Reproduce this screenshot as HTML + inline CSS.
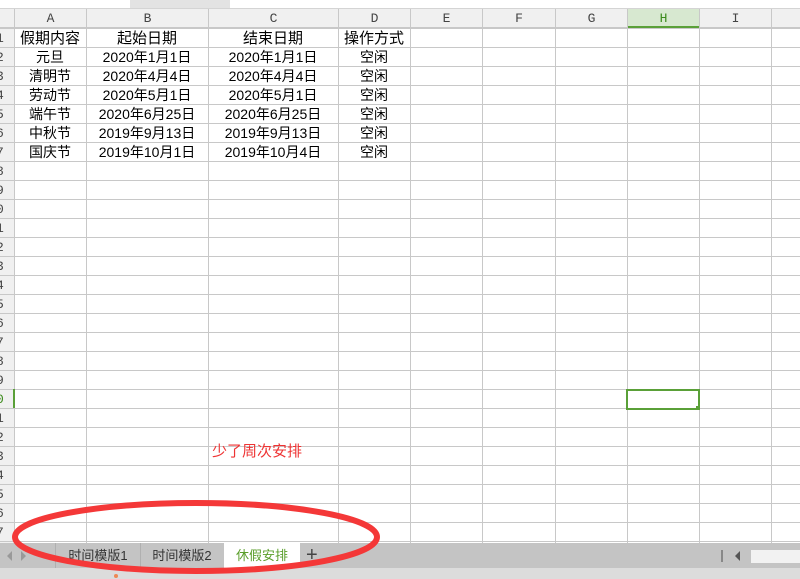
<!DOCTYPE html>
<html><head><meta charset="utf-8"><style>
body{margin:0;width:800px;height:579px;overflow:hidden;background:#fff;position:relative;font-family:"Liberation Sans","Noto Sans CJK SC",sans-serif}
.a{position:absolute}
.c{position:absolute;text-align:center;font-size:14px;color:#000;line-height:19px;font-family:"Liberation Sans","Noto Sans CJK SC",sans-serif}
.h{position:absolute;text-align:center;font-size:13px;color:#444;line-height:19px;font-family:"Liberation Mono","DejaVu Sans Mono",monospace}
</style></head><body>
<div class="a" style="left:0;top:0;width:800px;height:8px;background:#fff;border-bottom:1px solid #d4d4d4"></div>
<div class="a" style="left:130px;top:0;width:100px;height:8px;background:#e3e3e3"></div>
<div class="a" style="left:0;top:9px;width:800px;height:19px;background:#f0f0f0;border-bottom:1px solid #c8c8c8;box-sizing:border-box"></div>
<div class="a" style="left:0;top:28px;width:14px;height:515px;background:#f0f0f0"></div>
<div id="g"></div>
<div class="c" style="left:212px;top:442px;color:#ee3333;font-size:15px">少了周次安排</div>
<div class="a" style="left:0;top:543px;width:800px;height:25px;background:#c4c4c4"></div>
<div class="a" style="left:0;top:568px;width:800px;height:11px;background:#dcdcdc"></div>
<div class="a" style="left:7px;top:551px;width:0;height:0;border:5px solid transparent;border-right-color:#999;border-left:0"></div>
<div class="a" style="left:21px;top:551px;width:0;height:0;border:5px solid transparent;border-left-color:#999;border-right:0"></div>
<div class="a" style="left:55px;top:543px;width:84px;height:25px;border-left:1px solid #b0b0b0;border-right:1px solid #b0b0b0;font-size:13px;color:#333;text-align:center;line-height:25px">时间模版1</div>
<div class="a" style="left:140px;top:543px;width:84px;height:25px;border-right:1px solid #b0b0b0;font-size:13px;color:#333;text-align:center;line-height:25px">时间模版2</div>
<div class="a" style="left:224px;top:543px;width:76px;height:25px;background:#fff;font-size:13px;color:#5a9e2a;text-align:center;line-height:25px">休假安排</div>
<div class="a" style="left:306px;top:543px;font-size:20px;color:#444;line-height:25px">+</div>
<div class="a" style="left:721px;top:550px;width:2px;height:12px;background:#888"></div>
<div class="a" style="left:735px;top:551px;width:0;height:0;border:5px solid transparent;border-right-color:#555;border-left:0"></div>
<div class="a" style="left:751px;top:550px;width:49px;height:13px;background:#f2f2f2"></div>
<div class="a" style="left:114px;top:574px;width:4px;height:4px;border-radius:50%;background:#e85"></div>
<svg class="a" style="left:0;top:0" width="800" height="579"><ellipse cx="196" cy="537" rx="181" ry="34" fill="none" stroke="#f43838" stroke-width="6"/></svg>
<script>
var cols=[14,86,208,338,410,482,555,627,699,771,843],names="ABCDEFGHIJ",g="";
for(var i=0;i<cols.length;i++)g+='<div class="a" style="left:'+cols[i]+'px;top:9px;width:1px;height:534px;background:#c8c8c8"></div>';
for(var r=0;r<=27;r++){var y=28+19*r;g+='<div class="a" style="left:0;top:'+y+'px;width:800px;height:1px;background:#c8c8c8"></div>';
if(r<27)g+='<div class="h" style="left:-4px;top:'+(y+1)+'px;width:14px;text-align:left;'+(r==19?'color:#3a8a1a;':'')+'">'+((r+1)%10)+'</div>';}
for(var i=0;i<9;i++){var hl=i==7;g+='<div class="h" style="left:'+(cols[i]+1)+'px;top:9px;width:'+(cols[i+1]-cols[i]-1)+'px;'+(hl?'background:#d7e8d0;color:#3a8a1a;border-bottom:2px solid #5aa038;box-sizing:border-box;height:19px;':'')+'">'+names[i]+'</div>';}
var d=[["假期内容","起始日期","结束日期","操作方式"],["元旦","2020年1月1日","2020年1月1日","空闲"],["清明节","2020年4月4日","2020年4月4日","空闲"],["劳动节","2020年5月1日","2020年5月1日","空闲"],["端午节","2020年6月25日","2020年6月25日","空闲"],["中秋节","2019年9月13日","2019年9月13日","空闲"],["国庆节","2019年10月1日","2019年10月4日","空闲"]];
for(var r=0;r<d.length;r++)for(var c=0;c<4;c++)g+='<div class="c" style="left:'+cols[c]+'px;top:'+(29+19*r)+'px;width:'+(cols[c+1]-cols[c])+'px;'+(r==0?'font-size:15px;':'')+'">'+d[r][c]+'</div>';
g+='<div class="a" style="left:626px;top:389px;width:70px;height:17px;border:2px solid #5aa038"></div><div class="a" style="left:696px;top:406px;width:4px;height:4px;background:#5aa038"></div>';
g+='<div class="a" style="left:13px;top:389px;width:2px;height:19px;background:#5aa038"></div>';
document.getElementById("g").innerHTML=g;
</script>
</body></html>
